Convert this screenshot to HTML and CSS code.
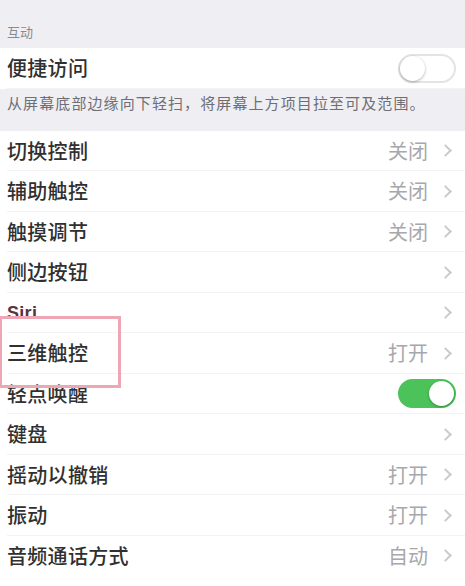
FILE: index.html
```html
<!DOCTYPE html>
<html lang="zh-CN">
<head>
<meta charset="utf-8">
<title>辅助功能</title>
<link rel="stylesheet" href="styles.css">
</head>
<body>
<div class="screen">
  <div class="section-header">互动</div>
  <div class="group">
    <div class="row">
      <span class="label">便捷访问</span>
      <span class="switch off"><span class="knob"></span></span>
    </div>
  </div>
  <div class="section-footer">从屏幕底部边缘向下轻扫，将屏幕上方项目拉至可及范围。</div>
  <div class="group list">
    <div class="row"><span class="label">切换控制</span><span class="detail"><span class="value">关闭</span><span class="chev"></span></span></div>
    <div class="row"><span class="label">辅助触控</span><span class="detail"><span class="value">关闭</span><span class="chev"></span></span></div>
    <div class="row"><span class="label">触摸调节</span><span class="detail"><span class="value">关闭</span><span class="chev"></span></span></div>
    <div class="row"><span class="label">侧边按钮</span><span class="detail"><span class="chev"></span></span></div>
    <div class="row"><span class="label siri">Siri</span><span class="detail"><span class="chev"></span></span></div>
    <div class="row"><span class="label">三维触控</span><span class="detail"><span class="value">打开</span><span class="chev"></span></span></div>
    <div class="row"><span class="label">轻点唤醒</span><span class="switch on"><span class="knob"></span></span></div>
    <div class="row"><span class="label">键盘</span><span class="detail"><span class="chev"></span></span></div>
    <div class="row"><span class="label">摇动以撤销</span><span class="detail"><span class="value">打开</span><span class="chev"></span></span></div>
    <div class="row"><span class="label">振动</span><span class="detail"><span class="value">打开</span><span class="chev"></span></span></div>
    <div class="row last"><span class="label">音频通话方式</span><span class="detail"><span class="value">自动</span><span class="chev"></span></span></div>
  </div>
  <div class="highlight"></div>
</div>
</body>
</html>
```
FILE: styles.css
```css
* { box-sizing: border-box; }
html, body { margin: 0; padding: 0; background: #ffffff; }
.screen {
  position: relative;
  width: 465px;
  height: 586px;
  overflow: hidden;
  background: #ffffff;
  font-family: "Noto Sans CJK SC", "Noto Sans", sans-serif;
  color: #2b2b2b;
}
.section-header {
  height: 48px;
  background: #efeff3;
  padding: 22px 0 0 7px;
  font-size: 13px;
  line-height: 20px;
  color: #8a8a8e;
}
.group { background: #ffffff; }
.row {
  height: 40.5px;
  display: flex;
  align-items: center;
  justify-content: space-between;
  padding: 0 7px 0 7px;
  position: relative;
}
.row::after {
  content: "";
  position: absolute;
  left: 7px;
  right: 0;
  bottom: 0;
  height: 1px;
  background: #f3f3f5;
}
.group:first-of-type .row { height: 40px; }
.group:first-of-type .row::after { display: none; }
.row.last::after { display: none; }
.label {
  font-size: 20px;
  line-height: 24px;
  letter-spacing: 0.3px;
  color: #303030;
  font-weight: 500;
}
.label.siri { color: #5a3340; font-family: "Liberation Sans", Arial, sans-serif; font-weight: 700; font-size: 18px; }
.detail {
  display: flex;
  align-items: center;
  gap: 13px;
}
.value {
  font-size: 20px;
  line-height: 24px;
  color: #a8a8ac;
}
.chev {
  width: 9px;
  height: 9px;
  border-top: 2px solid #cacace;
  border-right: 2px solid #cacace;
  transform: rotate(45deg);
  margin-right: 8px;
}
.section-footer {
  height: 42px;
  background: #efeff3;
  padding: 3px 0 0 7px;
  font-size: 15px;
  line-height: 22px;
  letter-spacing: 1.1px;
  color: #6e6e74;
  white-space: nowrap;
}
.switch {
  position: relative;
  width: 58px;
  height: 29px;
  border-radius: 15px;
  margin-right: 2px;
}
.switch.off {
  background: #ffffff;
  border: 2px solid #e4e4e6;
}
.switch.on {
  background: #4cc35a;
  border: 2px solid #4cc35a;
}
.knob {
  position: absolute;
  top: 0;
  width: 25px;
  height: 25px;
  border-radius: 50%;
  background: #ffffff;
  box-shadow: 0 1px 3px rgba(0,0,0,0.3);
}
.switch.off .knob { left: 0; }
.switch.on .knob { right: 0; }
.highlight {
  position: absolute;
  left: 0;
  top: 316px;
  width: 121px;
  height: 72px;
  border: 3px solid #eea6b5;
  border-left-width: 2px;
}
```
